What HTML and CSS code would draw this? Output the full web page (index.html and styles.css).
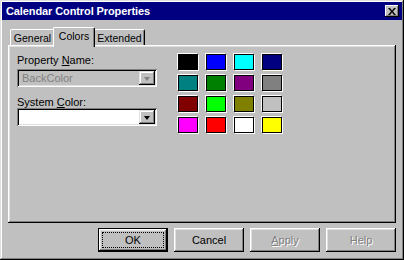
FILE: index.html
```html
<!DOCTYPE html>
<html lang="en">
<head>
  <meta charset="UTF-8" />
  <title>Calendar Control Properties</title>
  <link rel="stylesheet" href="styles.css">
</head>
<body>
  <div class="window">
    <div class="titlebar">
      <span class="title">Calendar Control Properties</span>
      <div class="close-btn">
        <svg width="8" height="7" viewBox="0 0 8 7">
          <path d="M0 0h2l2 2.5 2-2.5h2l-3 3.5 3 3.5h-2l-2-2.5-2 2.5h-2l3-3.5z" fill="#000"/>
        </svg>
      </div>
    </div>

    <div class="content">
      <div class="tabs">
        <div class="tab tab-general">General</div>
        <div class="tab tab-colors active">Colors</div>
        <div class="tab tab-extended">Extended</div>
      </div>

      <div class="panel">
        <div class="fields">
          <div class="label">Property <u>N</u>ame:</div>
          <div class="combo disabled">
            <span class="combo-text">BackColor</span>
            <span class="combo-btn"><i class="arrow"></i></span>
          </div>
          <div class="label second">System <u>C</u>olor:</div>
          <div class="combo">
            <span class="combo-text"></span>
            <span class="combo-btn"><i class="arrow"></i></span>
          </div>
        </div>

        <div class="swatches">
          <div class="swatch" style="background:#000000"></div>
          <div class="swatch" style="background:#0000ff"></div>
          <div class="swatch" style="background:#00ffff"></div>
          <div class="swatch" style="background:#000080"></div>
          <div class="swatch" style="background:#008080"></div>
          <div class="swatch" style="background:#008000"></div>
          <div class="swatch" style="background:#800080"></div>
          <div class="swatch" style="background:#808080"></div>
          <div class="swatch" style="background:#800000"></div>
          <div class="swatch" style="background:#00ff00"></div>
          <div class="swatch" style="background:#808000"></div>
          <div class="swatch" style="background:#c0c0c0"></div>
          <div class="swatch" style="background:#ff00ff"></div>
          <div class="swatch" style="background:#ff0000"></div>
          <div class="swatch" style="background:#ffffff"></div>
          <div class="swatch" style="background:#ffff00"></div>
        </div>
      </div>

      <div class="buttons">
        <div class="btn default"><span class="focus">OK</span></div>
        <div class="btn">Cancel</div>
        <div class="btn disabled"><span><u>A</u>pply</span></div>
        <div class="btn disabled">Help</div>
      </div>
    </div>
  </div>
</body>
</html>
```

FILE: styles.css
```css
body {
  margin: 0;
  padding: 0;
  width: 404px;
  height: 260px;
  background: #c0c0c0;
  font-family: "Liberation Sans", Arial, sans-serif;
  font-size: 11px;
  color: #000;
}

.window {
  box-sizing: border-box;
  width: 404px;
  height: 260px;
  padding: 2px;
  background: #c0c0c0;
  box-shadow: inset -1px -1px #000, inset 1px 1px #dfdfdf,
    inset -2px -2px #808080, inset 2px 2px #fff;
}

.titlebar {
  height: 18px;
  background: #000080;
  color: #fff;
  display: flex;
  align-items: center;
  justify-content: space-between;
  padding: 0 3px 0 4px;
}

.title {
  font-weight: bold;
  font-size: 11px;
  letter-spacing: -0.1px;
}

.close-btn {
  width: 14px;
  height: 12px;
  background: #c0c0c0;
  display: flex;
  align-items: center;
  justify-content: center;
  box-shadow: inset -1px -1px #000, inset 1px 1px #fff,
    inset -2px -2px #808080;
}

.content {
  padding: 7px 6px 0 6px;
}

/* tabs */
.tabs {
  display: flex;
  align-items: flex-end;
  height: 20px;
  padding-left: 2px;
  margin-bottom: -2px;
  position: relative;
  z-index: 1;
}

.tab {
  box-sizing: border-box;
  height: 16px;
  margin-bottom: 2px;
  padding-top: 2px;
  text-align: center;
  white-space: nowrap;
  font-size: 10.5px;
  background: #c0c0c0;
  border-top: 1px solid #fff;
  border-left: 1px solid #fff;
  border-right: 1px solid #000;
  border-radius: 2px 2px 0 0;
  box-shadow: inset -1px 0 #808080;
  line-height: 12px;
}

.tab-general {
  width: 45px;
}

.tab-colors {
  width: 42px;
}

.tab-extended {
  width: 51px;
}

.tab.active {
  height: 20px;
  margin: 0 -1px 0 -2px;
  position: relative;
}

.panel {
  box-sizing: border-box;
  height: 178px;
  display: flex;
  padding: 9px 0 0 9px;
  box-shadow: inset -1px -1px #000, inset 1px 1px #fff,
    inset -2px -2px #808080, inset 2px 2px #dfdfdf;
}

.fields {
  width: 140px;
}

.label {
  height: 14px;
  line-height: 12px;
}

.label.second {
  margin-top: 9px;
  height: 11px;
}

.combo {
  box-sizing: border-box;
  height: 18px;
  margin-top: 1px;
  background: #fff;
  display: flex;
  padding: 2px;
  box-shadow: inset 1px 1px #808080, inset -1px -1px #fff,
    inset 2px 2px #000, inset -2px -2px #dfdfdf;
}

.combo-text {
  flex: 1;
  padding-left: 3px;
  line-height: 14px;
}

.combo.disabled {
  background: #c0c0c0;
  color: #808080;
}

.combo-btn {
  width: 16px;
  height: 14px;
  background: #c0c0c0;
  display: flex;
  align-items: center;
  justify-content: center;
  box-shadow: inset -1px -1px #000, inset 1px 1px #dfdfdf,
    inset -2px -2px #808080, inset 2px 2px #fff;
}

.arrow {
  width: 0;
  height: 0;
  border-left: 3.5px solid transparent;
  border-right: 3.5px solid transparent;
  border-top: 4px solid #000;
  margin-top: 1px;
}

.combo.disabled .arrow {
  border-top-color: #808080;
}

/* colour grid */
.swatches {
  margin-left: 21px;
  display: grid;
  grid-template-columns: repeat(4, 20px);
  grid-auto-rows: 16px;
  column-gap: 8px;
  row-gap: 5px;
  align-content: start;
}

.swatch {
  box-sizing: border-box;
  border: 1px solid #000;
  box-shadow: -1px -1px 0 #fff, 1px 1px 0 #fff;
}

/* dialog buttons */
.buttons {
  display: flex;
  justify-content: flex-end;
  gap: 6px;
  margin-top: 5px;
}

.btn {
  box-sizing: border-box;
  width: 70px;
  height: 24px;
  display: flex;
  align-items: center;
  justify-content: center;
  box-shadow: inset -1px -1px #000, inset 1px 1px #fff,
    inset -2px -2px #808080, inset 2px 2px #dfdfdf;
}

.btn.default {
  border: 1px solid #000;
  padding: 3px;
}

.btn .focus {
  box-sizing: border-box;
  width: 100%;
  height: 100%;
  display: flex;
  align-items: center;
  justify-content: center;
  border: 1px dotted #000;
}

.btn.disabled {
  color: #808080;
  text-shadow: 1px 1px 0 #fff;
}
```
